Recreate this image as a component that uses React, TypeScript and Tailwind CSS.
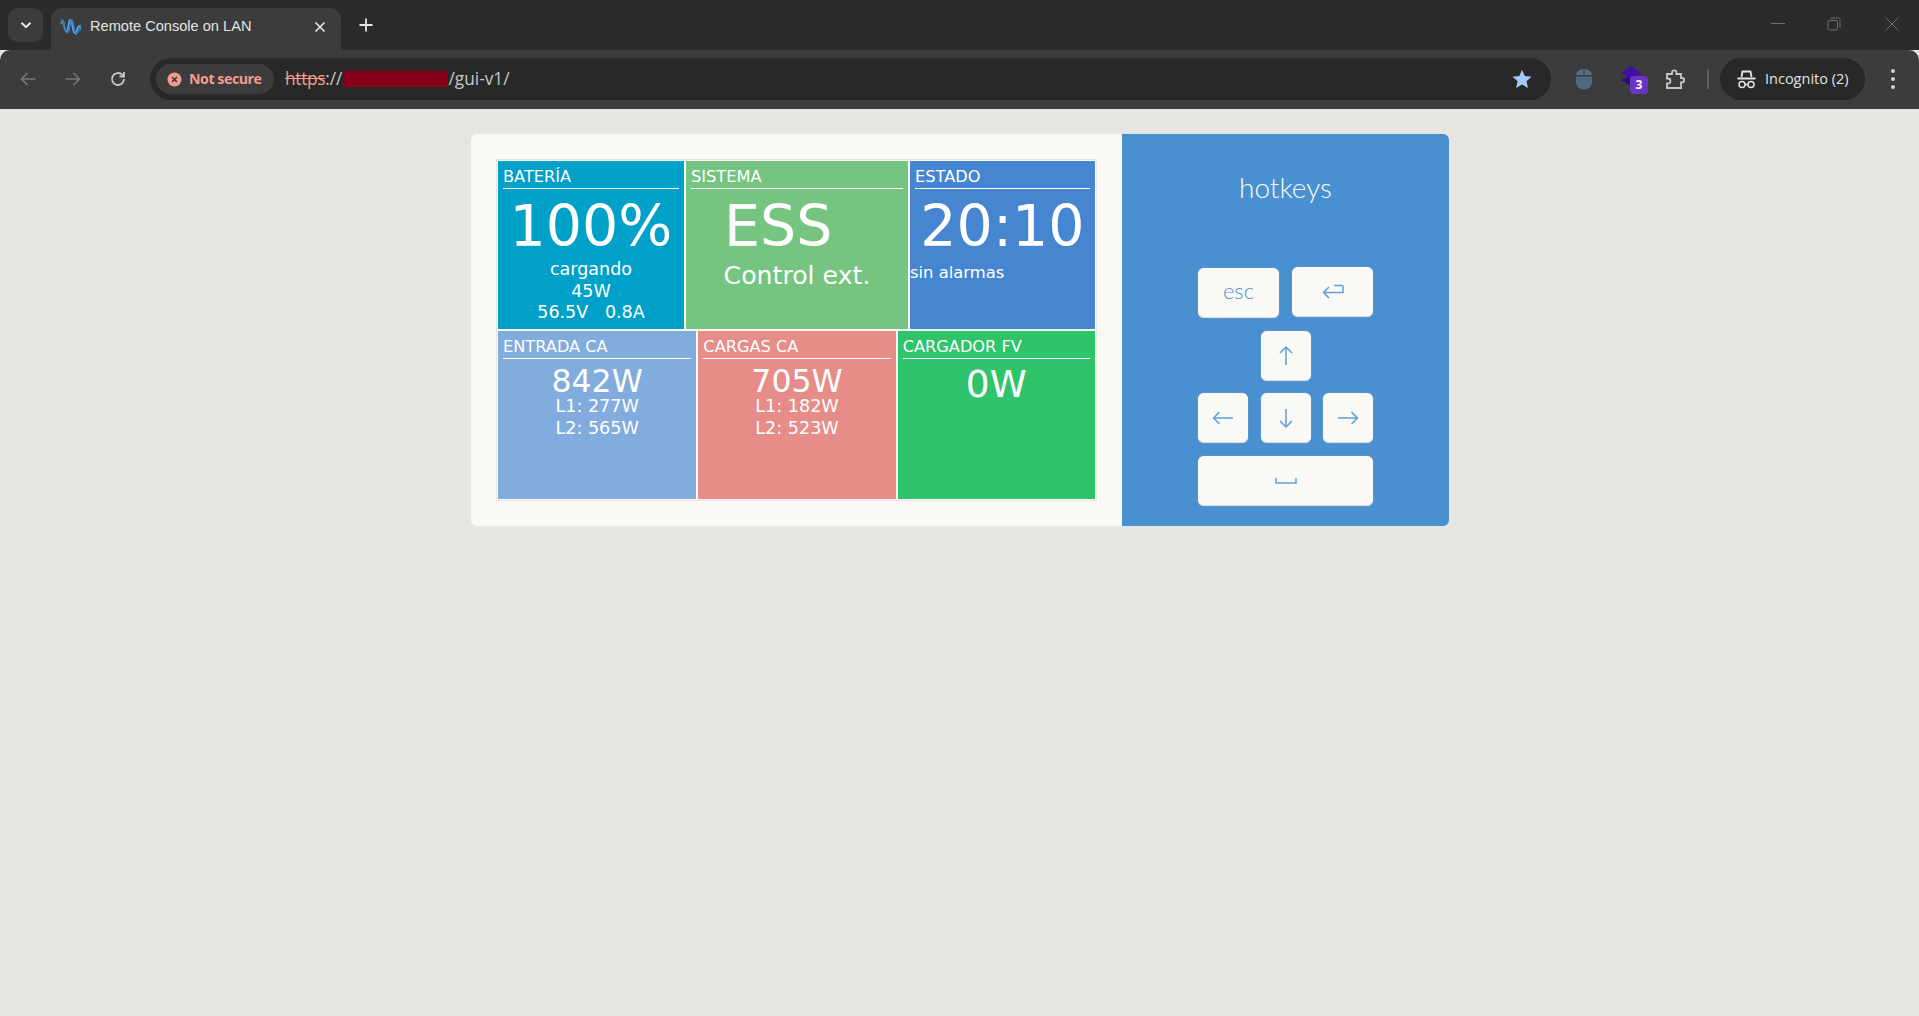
import React from "react";

const dv = "font-['DejaVu_Sans',sans-serif]";

function Title({ t }: { t: string }) {
  return (
    <div className="mx-[5px] h-[28px] border-b border-white text-[16.200px] leading-[26px] pt-[3px]">{t}</div>
  );
}

function Arrow({ d }: { d: string }) {
  return (
    <svg width="22" height="22" viewBox="0 0 22 22" fill="none" stroke="#5f9fda" strokeWidth="1.5">
      <path d={d} />
    </svg>
  );
}

function Key({ w, h = "h-[50px]", children, extra = "" }: { w: string; h?: string; children: React.ReactNode; extra?: string }) {
  return (
    <div className={`${w} ${h} ${extra} flex items-center justify-center rounded-[6px] bg-[#faf9f5] border-b border-[#dcdbd7] shadow-[0_0_1px_#d8d7d3]`}>
      {children}
    </div>
  );
}

export default function App() {
  return (
    <div className="min-h-[1016px] w-full bg-[#e6e5e1] flex flex-col font-['Open_Sans',sans-serif]">
      {/* tab strip */}
      <div className="h-[50px] bg-[#2b2b2b] flex items-start pl-[8px] relative">
        <div className="mt-[8px] w-[35px] h-[34px] rounded-[10px] bg-[#3c3c3c] flex items-center justify-center">
          <svg width="14" height="14" viewBox="0 0 14 14" fill="none" stroke="#e6e6e6" strokeWidth="2">
            <path d="M2.500 4.800 7 9.200l4.500-4.400" />
          </svg>
        </div>
        <div className="ml-[8px] mt-[8px] w-[290px] h-[42px] rounded-t-[11px] bg-[#3c3c3c] flex items-center pl-[9px] pb-[4px] relative z-10">
          <svg width="22" height="16" viewBox="0 0 22 16" fill="none" stroke="#3f8ed6" strokeWidth="1.600">
            <path d="M1 2.500c1.500-2.500 2.500-1 3 3s1 7 2.500 7S8.500 9 9 5.500 10 1 11.500 1 13 6 13.500 9s1 6 2.500 6 2-3 2.500-5.500S20 6 21 7" />
            <path d="M1 5c1.500-3 2-3 2.500-1.500s1 7.500 2.500 8.500S8 9 8.500 5 10 0 11 2s1.500 8 2.500 10.500 2.500 2 3.500-2S19 6 21 9.500" stroke="#5da5e4" strokeWidth="1.300" />
            <path d="M1 1c2 0 2.500 2 3.500 6S6 14 7.500 14 10 8 10.500 4 12 1 13 3.500 14.500 12 16 13.500 19 10 21 11" stroke="#2f7cc2" strokeWidth="1.300" />
          </svg>
          <span className="ml-[8px] text-[14.600px] text-[#e3e3e3] font-['Liberation_Sans',sans-serif] whitespace-nowrap">Remote Console on LAN</span>
          <svg width="12" height="12" viewBox="0 0 12 12" stroke="#e6e6e6" strokeWidth="1.700" className="absolute left-[263px] top-[13px]">
            <path d="M1.500 1.500l9 9M10.500 1.500l-9 9" />
          </svg>
        </div>
        <svg width="14" height="14" viewBox="0 0 14 14" stroke="#e6e6e6" strokeWidth="1.800" className="ml-[18px] mt-[18px]">
          <path d="M7 .5v13M.5 7h13" />
        </svg>
        {/* window controls */}
        <div className="ml-auto flex items-center gap-[43px] mt-[17px] pr-[20px]">
          <svg width="14" height="14" viewBox="0 0 14 14" stroke="#6f6f6f" strokeWidth="1"><path d="M0 6.500h14" /></svg>
          <svg width="14" height="14" viewBox="0 0 14 14" fill="none" stroke="#6f6f6f" strokeWidth="1" className="ml-[-1px] mr-[1px]">
            <rect x="1" y="3.500" width="9.500" height="9.500" rx="1.500" />
            <path d="M3.500 1h8a1.500 1.500 0 0 1 1.500 1.500v8" />
          </svg>
          <svg width="14" height="14" viewBox="0 0 14 14" stroke="#6f6f6f" strokeWidth="1"><path d="M.5.500l13 13M13.500.500l-13 13" /></svg>
        </div>
      </div>

      {/* toolbar */}
      <div className="h-[59px] bg-[#3c3c3c] rounded-t-[10px] flex items-center pr-[18px] pl-[20px] pb-[1px]">
        <svg width="16" height="16" viewBox="0 0 16 16" fill="none" stroke="#777" strokeWidth="1.600">
          <path d="M15.500 8H1.500M7.500 2 1.500 8l6 6" />
        </svg>
        <svg width="16" height="16" viewBox="0 0 16 16" fill="none" stroke="#777" strokeWidth="1.600" className="ml-[29px]">
          <path d="M.5 8h14M8.500 2l6 6-6 6" />
        </svg>
        <svg width="18" height="18" viewBox="0 0 18 18" fill="none" stroke="#c7c7c7" strokeWidth="1.800" className="ml-[28px]">
          <path d="M15 9a6 6 0 1 1-1.800-4.300L15 6.500M15 2v4.500h-4.500" />
        </svg>
        {/* omnibox */}
        <div className="ml-[23px] w-[1401px] h-[42px] rounded-full bg-[#282828] flex items-center pl-[6px] pr-[19px] shrink-0">
          <div className="w-[118px] h-[30px] rounded-full bg-[#3c3c3c] flex items-center pl-[11px] shrink-0">
            <svg width="15" height="15" viewBox="0 0 15 15">
              <circle cx="7.500" cy="7.500" r="7" fill="#f49c8f" />
              <path d="M5 5l5 5M10 5l-5 5" stroke="#3c3c3c" strokeWidth="1.700" />
            </svg>
            <span className="ml-[7px] text-[14.200px] font-bold text-[#f49c8f] font-['Open_Sans',sans-serif] tracking-[-0.450px] whitespace-nowrap">Not secure</span>
          </div>
          <div className="ml-[11px] flex items-center text-[17.300px] text-[#c7c7c7] font-['Open_Sans',sans-serif] whitespace-nowrap">
            <span className="text-[#f49c8f] line-through tracking-[-0.300px]">https</span>
            <span>://</span>
            <span className="inline-block w-[105px] h-[16px] bg-[#850018] ml-[1px]" />
            <span>/gui-v1/</span>
          </div>
          <svg width="20" height="20" viewBox="0 0 20 20" className="ml-auto" fill="#a8c7fa">
            <path d="M10 .8l2.800 6.300 6.800.700-5.100 4.500 1.500 6.700L10 15.500l-5.900 3.500 1.500-6.700L.5 7.800l6.800-.700z" />
          </svg>
        </div>
        {/* extensions */}
        <svg width="18" height="22" viewBox="0 0 18 22" className="ml-[24px]">
          <path d="M1 7a8 6 0 0 1 7.500-6v6H1zM9.500 1A8 6 0 0 1 17 7H9.500z" fill="#55708a" />
          <path d="M1 8.500h16V15a8 6.500 0 0 1-16 0z" fill="#4d6a85" />
        </svg>
        <div className="ml-[27px] relative w-[22px] h-[28px] shrink-0">
          <svg width="22" height="22" viewBox="0 0 22 22" className="absolute left-0 top-0">
            <path d="M11 10 1 15l10 6 10-6z" fill="#2b0f7d" />
            <path d="M11 1 1 8l10 6 10-6z" fill="#3f0fa8" />
          </svg>
          <div className="absolute left-[10px] top-[11px] w-[18px] h-[18px] rounded-[4px] bg-[#6b34c4] text-white text-[12px] font-bold flex items-center justify-center font-['Open_Sans',sans-serif]">3</div>
        </div>
        <svg width="21" height="21" viewBox="0 0 21 21" fill="none" stroke="#c7c7c7" strokeWidth="1.800" className="ml-[23px]">
          <path d="M2 5h5V3.500a2.200 2.200 0 0 1 4.400 0V5H16v4h1a2.200 2.200 0 0 1 0 4.400h-1V19H2v-4.500h1a2.500 2.500 0 0 0 0-5H2z" />
        </svg>
        <div className="ml-[21px] w-[2px] h-[20px] bg-[#5c5c5c]" />
        <div className="ml-[11px] w-[145px] h-[42px] rounded-full bg-[#282828] flex items-center pl-[17px] shrink-0">
          <svg width="19" height="19" viewBox="0 0 19 19" fill="none" stroke="#e3e3e3" strokeWidth="1.500">
            <path d="M4.500 7 5.500 1.500h8L14.500 7M.5 8.500h18" strokeWidth="1.800" />
            <circle cx="5" cy="14.500" r="3" />
            <circle cx="14" cy="14.500" r="3" />
            <path d="M8 14.500h3" />
          </svg>
          <span className="ml-[9px] text-[14.500px] text-[#e3e3e3] font-['Open_Sans',sans-serif] whitespace-nowrap">Incognito (2)</span>
        </div>
        <div className="ml-auto flex flex-col gap-[4px] pr-[6px]">
          <div className="w-[4px] h-[4px] rounded-full bg-[#d0d0d0]" />
          <div className="w-[4px] h-[4px] rounded-full bg-[#d0d0d0]" />
          <div className="w-[4px] h-[4px] rounded-full bg-[#d0d0d0]" />
        </div>
      </div>

      {/* page */}
      <div className="flex justify-center pt-[25px] pl-[1px]">
        <div className="w-[978px] h-[392px] flex rounded-[6px] overflow-hidden">
          <div className={`w-[651px] bg-[#faf9f5] pl-[25px] pt-[25px] ${dv} text-white`}>
            <div className="w-[601px] h-[342px] border border-[#e6e5e1] p-[1px] flex flex-col gap-[2px]">
              <div className="flex gap-[2px] h-[168px]">
                <div className="w-[186px] bg-[#00a1c9] overflow-hidden">
                  <Title t="BATERÍA" />
                  <div className="text-center text-[57px] leading-[64px] mt-[5px]">100%</div>
                  <div className="text-center text-[17.500px] leading-[21.500px] mt-[1px]">
                    <div>cargando</div>
                    <div>45W</div>
                    <div className="whitespace-pre">56.5V   0.8A</div>
                  </div>
                </div>
                <div className="w-[222px] bg-[#75c580]">
                  <Title t="SISTEMA" />
                  <div className="text-[57px] leading-[64px] mt-[5px] pl-[38px]">ESS</div>
                  <div className="text-center text-[25.200px] leading-[30px] mt-[3px]">Control ext.</div>
                </div>
                <div className="w-[185px] bg-[#4686d0]">
                  <Title t="ESTADO" />
                  <div className="text-center text-[57px] leading-[64px] mt-[5px]">20:10</div>
                  <div className="text-[16.400px] leading-[20px] mt-[5px] whitespace-nowrap">sin alarmas</div>
                </div>
              </div>
              <div className="flex gap-[2px] h-[168px]">
                <div className="w-[199px] bg-[#82abde]">
                  <Title t="ENTRADA CA" />
                  <div className="text-center text-[31.500px] leading-[36px] mt-[4px]">842W</div>
                  <div className="text-center text-[17.600px] leading-[21.500px] mt-[-3px]">
                    <div>L1: 277W</div>
                    <div>L2: 565W</div>
                  </div>
                </div>
                <div className="w-[198px] bg-[#e68d8a]">
                  <Title t="CARGAS CA" />
                  <div className="text-center text-[31.500px] leading-[36px] mt-[4px]">705W</div>
                  <div className="text-center text-[17.600px] leading-[21.500px] mt-[-3px]">
                    <div>L1: 182W</div>
                    <div>L2: 523W</div>
                  </div>
                </div>
                <div className="w-[198px] bg-[#2fc46c]">
                  <Title t="CARGADOR FV" />
                  <div className="text-center text-[37.500px] leading-[42px] mt-[4px]">0W</div>
                </div>
              </div>
            </div>
          </div>
          <div className="w-[327px] bg-[#4990d1] flex flex-col items-center">
            <div className="mt-[37px] h-[32px] text-[28px] leading-[32px] font-light text-[#faf9f5] font-['Lato',sans-serif]">hotkeys</div>
            <div className="mt-[64px] w-[175px] flex flex-col">
              <div className="flex justify-between">
                <Key w="w-[81px]" extra="mt-[1px] pb-[4px] text-[22px] text-[#4f94d4] font-['Lato',sans-serif] font-light">esc</Key>
                <Key w="w-[81px]">
                  <Arrow d="M21 4.500v7H1.500M7 6l-5.500 5.500L7 17M12 4.500h9" />
                </Key>
              </div>
              <div className="flex justify-center mt-[13px]">
                <Key w="w-[50px]"><Arrow d="M11 20V2M5 8l6-6 6 6" /></Key>
              </div>
              <div className="flex justify-between mt-[12px]">
                <Key w="w-[50px]"><Arrow d="M21 11H1.500M7.500 5l-6 6 6 6" /></Key>
                <Key w="w-[50px]"><Arrow d="M11 2v18M5 14l6 6 6-6" /></Key>
                <Key w="w-[50px]"><Arrow d="M1 11h19.500M14.500 5l6 6-6 6" /></Key>
              </div>
              <Key w="w-[175px]" extra="mt-[13px]">
                <Arrow d="M1 8v5h20V8" />
              </Key>
            </div>
          </div>
        </div>
      </div>
    </div>
  );
}
